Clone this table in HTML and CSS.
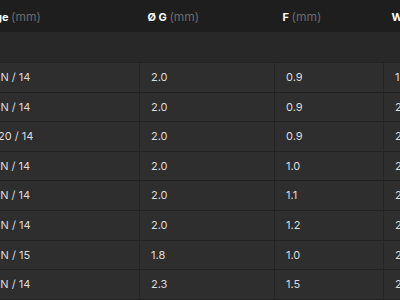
FILE: index.html
```html
<!DOCTYPE html>
<html>
<head>
	<meta charset="UTF-8">
	<title>Sizes</title>
	<link rel="stylesheet" href="styles.css">
</head>
<body>

<!-- table is scrolled sideways, first column partly out of view -->
<div class="scroller">
	<table class="sizes">
		<colgroup>
			<col class="c1"><col class="c2"><col class="c3"><col class="c4">
		</colgroup>
		<thead>
			<tr>
				<th>Gauge <span class="unit">(mm)</span></th>
				<th>Ø G <span class="unit">(mm)</span></th>
				<th>F <span class="unit">(mm)</span></th>
				<th>W <span class="unit">(mm)</span></th>
			</tr>
		</thead>
		<tbody>
			<tr class="spacer"><td colspan="4"></td></tr>
			<tr><td>10/0 N / 14</td><td>2.0</td><td>0.9</td><td>1.8</td></tr>
			<tr><td>10/0 N / 14</td><td>2.0</td><td>0.9</td><td>2.0</td></tr>
			<tr><td>10/1.20 / 14</td><td>2.0</td><td>0.9</td><td>2.2</td></tr>
			<tr><td>12/0 N / 14</td><td>2.0</td><td>1.0</td><td>2.4</td></tr>
			<tr><td>12/0 N / 14</td><td>2.0</td><td>1.1</td><td>2.6</td></tr>
			<tr><td>14/0 N / 14</td><td>2.0</td><td>1.2</td><td>2.8</td></tr>
			<tr><td>14/0 N / 15</td><td>1.8</td><td>1.0</td><td>2.5</td></tr>
			<tr><td>16/0 N / 14</td><td>2.3</td><td>1.5</td><td>2.9</td></tr>
		</tbody>
	</table>
</div>

</body>
</html>
```

FILE: styles.css
```css
html { background-color: #2e2e2e; }
body { margin: 0; background-color: #2e2e2e; font-family: Inter, "Noto Sans", sans-serif; overflow: hidden; }

.scroller { width: 400px; height: 300px; overflow: hidden; }
.sizes { border-collapse: collapse; table-layout: fixed; width: 540px; margin-left: -37px; }
.sizes .c1 { width: 176px; }
.sizes .c2 { width: 135px; }
.sizes .c3 { width: 109px; }
.sizes .c4 { width: 120px; }

.sizes th {
	background-color: #1e1e1e;
	color: #ffffff;
	font-size: 11px;
	font-weight: 700;
	text-align: left;
	height: 32px;
	padding: 0 8px;
	box-sizing: border-box;
	white-space: nowrap;
}
.sizes th:first-child { padding-left: 10px; }
.sizes .unit { color: #6a6a6a; font-weight: 400; font-size: 12px; }

.sizes td {
	color: #dcdcdc;
	font-size: 11px;
	line-height: 18.6px;
	padding: 5px 11px;
	border: 1px solid #232323;
	white-space: nowrap;
	overflow: hidden;
}
.sizes .spacer td { background-color: #282828; height: 30px; padding: 0; border: 0; }
.sizes tbody tr { background-color: #2e2e2e; }
```
